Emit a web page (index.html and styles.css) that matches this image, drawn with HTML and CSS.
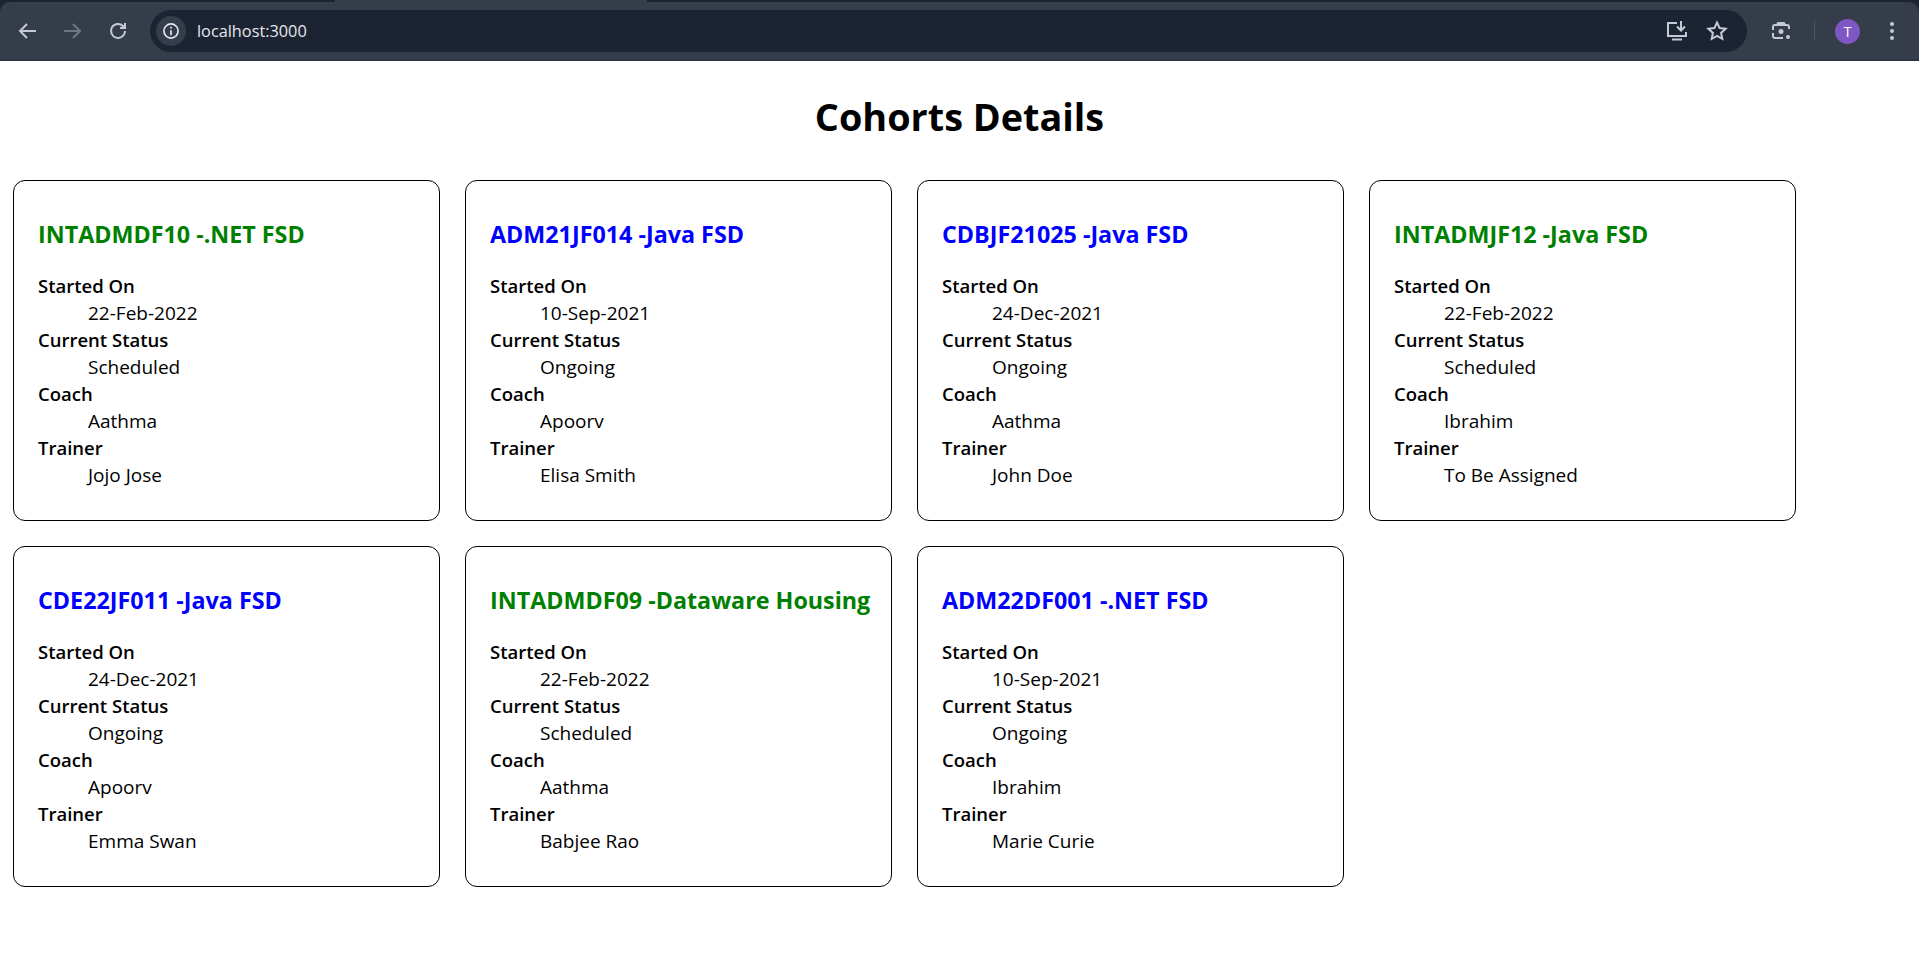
FILE: index.html
```html
<!DOCTYPE html>
<html lang="en">
<head>
    <meta charset="UTF-8">
    <meta name="viewport" content="width=device-width, initial-scale=1.0">
    <title>Cohorts Details</title>
    <link rel="stylesheet" href="styles.css">
</head>
<body>
    <div class="window-top">
        <div class="active-tab"></div>
        <div class="toolbar">
            <svg class="tool-icon" viewBox="0 0 24 24"><path d="M20 12H5M11 5l-7 7 7 7" fill="none" stroke="#c4cad4" stroke-width="2"/></svg>
            <svg class="tool-icon" viewBox="0 0 24 24"><path d="M4 12h15M13 5l7 7-7 7" fill="none" stroke="#6f7683" stroke-width="2"/></svg>
            <svg class="tool-icon reload" viewBox="0 0 24 24"><path d="M19 12a7 7 0 1 1-2-5l2 2M19 4v5h-5" fill="none" stroke="#c4cad4" stroke-width="2"/></svg>
            <div class="omnibox">
                <span class="site-info">
                    <svg viewBox="0 0 24 24" width="20" height="20"><circle cx="12" cy="12" r="8.5" fill="none" stroke="#e4e7ec" stroke-width="2"/><path d="M12 11v6M12 7v2" stroke="#e4e7ec" stroke-width="2"/></svg>
                </span>
                <span class="url">localhost:3000</span>
                <svg class="omni-icon" viewBox="0 0 24 24"><path d="M12 4H3v13h18v-4M7 20.500h10M16 2v9M12 7.500l4 4 4-4" fill="none" stroke="#c4cad4" stroke-width="2"/></svg>
                <svg class="omni-icon" viewBox="0 0 24 24"><path d="M12 3.500l2.600 5.600 6 .7-4.500 4.100 1.200 6-5.300-3-5.300 3 1.200-6-4.500-4.100 6-.7z" fill="none" stroke="#c4cad4" stroke-width="2"/></svg>
            </div>
            <svg class="tool-icon lens" viewBox="0 0 24 24"><path d="M8 6l1-2h6l1 2M4 11V8a2 2 0 0 1 2-2h12a2 2 0 0 1 2 2v2M4 14v3a2 2 0 0 0 2 2h8" fill="none" stroke="#c4cad4" stroke-width="2"/><circle cx="12" cy="12.500" r="2.500" fill="#c4cad4"/><circle cx="19" cy="18" r="2" fill="#c4cad4"/></svg>
            <span class="divider"></span>
            <span class="avatar">T</span>
            <svg class="tool-icon menu" viewBox="0 0 24 24"><circle cx="12" cy="5" r="2" fill="#c4cad4"/><circle cx="12" cy="12" r="2" fill="#c4cad4"/><circle cx="12" cy="19" r="2" fill="#c4cad4"/></svg>
        </div>
    </div>

    <h1>Cohorts Details</h1>

    <div class="cohorts">
        <div class="card">
            <h3 class="scheduled">INTADMDF10 -.NET FSD</h3>
            <dl>
                <dt>Started On</dt><dd>22-Feb-2022</dd>
                <dt>Current Status</dt><dd>Scheduled</dd>
                <dt>Coach</dt><dd>Aathma</dd>
                <dt>Trainer</dt><dd>Jojo Jose</dd>
            </dl>
        </div>
        <div class="card">
            <h3 class="ongoing">ADM21JF014 -Java FSD</h3>
            <dl>
                <dt>Started On</dt><dd>10-Sep-2021</dd>
                <dt>Current Status</dt><dd>Ongoing</dd>
                <dt>Coach</dt><dd>Apoorv</dd>
                <dt>Trainer</dt><dd>Elisa Smith</dd>
            </dl>
        </div>
        <div class="card">
            <h3 class="ongoing">CDBJF21025 -Java FSD</h3>
            <dl>
                <dt>Started On</dt><dd>24-Dec-2021</dd>
                <dt>Current Status</dt><dd>Ongoing</dd>
                <dt>Coach</dt><dd>Aathma</dd>
                <dt>Trainer</dt><dd>John Doe</dd>
            </dl>
        </div>
        <div class="card">
            <h3 class="scheduled">INTADMJF12 -Java FSD</h3>
            <dl>
                <dt>Started On</dt><dd>22-Feb-2022</dd>
                <dt>Current Status</dt><dd>Scheduled</dd>
                <dt>Coach</dt><dd>Ibrahim</dd>
                <dt>Trainer</dt><dd>To Be Assigned</dd>
            </dl>
        </div>
        <div class="card">
            <h3 class="ongoing">CDE22JF011 -Java FSD</h3>
            <dl>
                <dt>Started On</dt><dd>24-Dec-2021</dd>
                <dt>Current Status</dt><dd>Ongoing</dd>
                <dt>Coach</dt><dd>Apoorv</dd>
                <dt>Trainer</dt><dd>Emma Swan</dd>
            </dl>
        </div>
        <div class="card">
            <h3 class="scheduled">INTADMDF09 -Dataware Housing</h3>
            <dl>
                <dt>Started On</dt><dd>22-Feb-2022</dd>
                <dt>Current Status</dt><dd>Scheduled</dd>
                <dt>Coach</dt><dd>Aathma</dd>
                <dt>Trainer</dt><dd>Babjee Rao</dd>
            </dl>
        </div>
        <div class="card">
            <h3 class="ongoing">ADM22DF001 -.NET FSD</h3>
            <dl>
                <dt>Started On</dt><dd>10-Sep-2021</dd>
                <dt>Current Status</dt><dd>Ongoing</dd>
                <dt>Coach</dt><dd>Ibrahim</dd>
                <dt>Trainer</dt><dd>Marie Curie</dd>
            </dl>
        </div>
    </div>
</body>
</html>
```

FILE: styles.css
```css
html, body {
    margin: 0;
    background: #fff;
}
body {
    font-family: "Open Sans", "Noto Sans", sans-serif;
    font-size: 19px;
    line-height: 27px;
    color: #000;
    overflow: hidden;
}
.window-top {
    height: 61px;
    background: #1c2433;
}
.active-tab {
    width: 312px;
    height: 2px;
    margin-left: 335px;
    background: #353c4a;
}
.toolbar {
    height: 59px;
    box-sizing: border-box;
    padding: 8px 5px 7px 6px;
    display: flex;
    align-items: center;
    background: #353c4a;
    border-bottom: 2px solid #2e3542;
    border-radius: 10px 10px 0 0;
}
.tool-icon {
    width: 24px;
    height: 24px;
    margin: 0 10px;
    flex: none;
}
.reload {
    margin-left: 12px;
}
.omnibox {
    flex: 1;
    height: 42px;
    margin-left: 10px;
    border-radius: 21px;
    background: #1c2433;
    display: flex;
    align-items: center;
    padding: 0 18px 0 6px;
}
.site-info {
    width: 30px;
    height: 30px;
    border-radius: 15px;
    background: #353c4a;
    display: flex;
    align-items: center;
    justify-content: center;
}
.url {
    flex: 1;
    margin-left: 11px;
    font-size: 16.3px;
    color: #e4e7ec;
}
.omni-icon {
    width: 24px;
    height: 24px;
    margin-left: 16px;
}
.lens {
    margin-left: 22px;
    margin-right: 21px;
}
.divider {
    width: 1px;
    height: 20px;
    margin-right: 20px;
    background: #4b5361;
}
.avatar {
    width: 25px;
    height: 25px;
    border-radius: 50%;
    background: #7e57c2;
    color: #fff;
    font-size: 14px;
    line-height: 25px;
    text-align: center;
}
.menu {
    margin-left: 20px;
    margin-right: 10px;
}
h1 {
    margin: 29px 0 36px;
    font-size: 37.8px;
    line-height: 54px;
    text-align: center;
}
.cohorts {
    display: flex;
    flex-wrap: wrap;
    gap: 25px;
    padding-left: 13px;
}
.card {
    width: 427px;
    height: 341px;
    box-sizing: border-box;
    padding: 25px 24px;
    border: 1px solid #000;
    border-radius: 12px;
}
h3 {
    margin: 0 0 23px;
    padding-top: 13px;
    font-size: 23.3px;
    line-height: 31px;
    font-weight: 700;
    white-space: nowrap;
}
.scheduled {
    color: #008000;
}
.ongoing {
    color: #0000ff;
}
dl {
    margin: 0;
}
dt {
    margin: -1px 0 1px;
    font-size: 18.5px;
    font-weight: 600;
}
dd {
    margin: 0 0 0 50px;
}
```
